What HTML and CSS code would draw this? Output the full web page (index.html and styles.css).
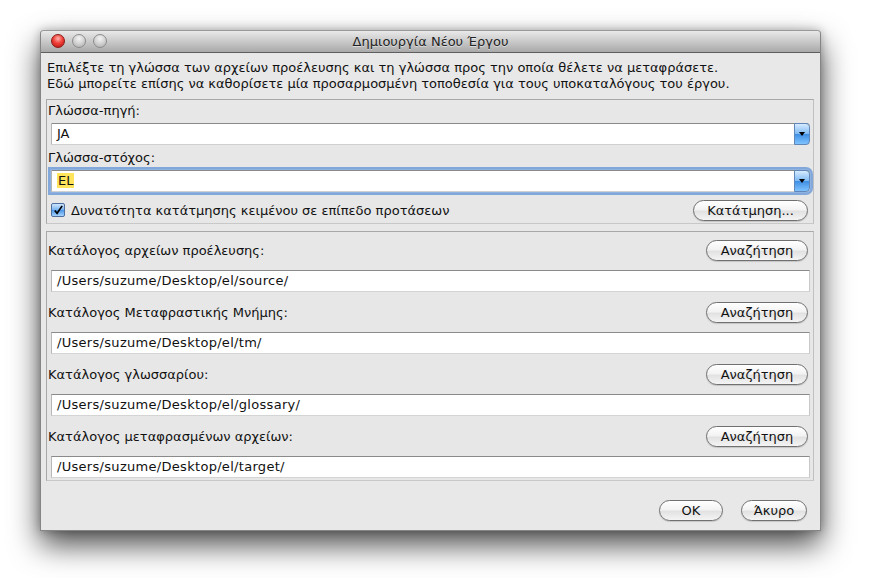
FILE: index.html
```html
<!DOCTYPE html>
<html lang="el">
<head>
<meta charset="utf-8">
<title>Δημιουργία Νέου Έργου</title>
<link rel="stylesheet" href="styles.css">
</head>
<body>
<div class="window">
  <div class="titlebar">
    <div class="lights">
      <span class="light red"></span>
      <span class="light gray"></span>
      <span class="light gray"></span>
    </div>
    <div class="title">Δημιουργία Νέου Έργου</div>
  </div>
  <div class="content">
    <div class="intro">
      <div>Επιλέξτε τη γλώσσα των αρχείων προέλευσης και τη γλώσσα προς την οποία θέλετε να μεταφράσετε.</div>
      <div>Εδώ μπορείτε επίσης να καθορίσετε μία προσαρμοσμένη τοποθεσία για τους υποκαταλόγους του έργου.</div>
    </div>
    <div class="panel lang">
      <div class="label">Γλώσσα-πηγή:</div>
      <div class="combo"><span class="value">JA</span><span class="arrow"><svg width="8" height="6" viewBox="0 0 8 6"><path d="M1 1h6L4 5z" fill="#000"/></svg></span></div>
      <div class="label l2">Γλώσσα-στόχος:</div>
      <div class="combo focus"><span class="value"><span class="sel">EL</span></span><span class="arrow"><svg width="8" height="6" viewBox="0 0 8 6"><path d="M1 1h6L4 5z" fill="#000"/></svg></span></div>
      <div class="checkrow">
        <label class="check"><span class="box"><svg width="13" height="13" viewBox="0 0 13 13"><path d="M3 6.5l2.5 3L11 1.5" fill="none" stroke="#000" stroke-width="1.8"/></svg></span>Δυνατότητα κατάτμησης κειμένου σε επίπεδο προτάσεων</label>
        <button class="btn seg">Κατάτμηση...</button>
      </div>
    </div>
    <div class="panel dirs">
      <div class="row"><span class="rlabel">Κατάλογος αρχείων προέλευσης:</span><button class="btn search">Αναζήτηση</button></div>
      <div class="field">/Users/suzume/Desktop/el/source/</div>
      <div class="row"><span class="rlabel">Κατάλογος Μεταφραστικής Μνήμης:</span><button class="btn search">Αναζήτηση</button></div>
      <div class="field">/Users/suzume/Desktop/el/tm/</div>
      <div class="row"><span class="rlabel">Κατάλογος γλωσσαρίου:</span><button class="btn search">Αναζήτηση</button></div>
      <div class="field">/Users/suzume/Desktop/el/glossary/</div>
      <div class="row"><span class="rlabel">Κατάλογος μεταφρασμένων αρχείων:</span><button class="btn search">Αναζήτηση</button></div>
      <div class="field">/Users/suzume/Desktop/el/target/</div>
    </div>
    <div class="footer">
      <button class="btn ok">OK</button>
      <button class="btn cancel">Άκυρο</button>
    </div>
  </div>
</div>
</body>
</html>
```
FILE: styles.css
```css
* { box-sizing: border-box; }
html, body { margin: 0; padding: 0; background: #fff; }
body {
  font-family: "DejaVu Sans", "Liberation Sans", sans-serif;
  font-size: 13px;
  color: #111;
  padding: 30px 0 0 40px;
  min-height: 578px;
}
.window {
  width: 781px;
  height: 501px;
  background: #e8e8e8;
  border: 1px solid #858585;
  border-top-color: #9a9a9a;
  border-radius: 4px 4px 0 0;
  box-shadow: 0 14px 30px rgba(0,0,0,0.7), 0 0 10px rgba(0,0,0,0.25);
  display: flex;
  flex-direction: column;
}
.titlebar {
  height: 22px;
  flex: none;
  background: linear-gradient(#e9e9e9, #c9c9c9 50%, #a9a9a9);
  border-bottom: 1px solid #5e5e5e;
  border-radius: 4px 4px 0 0;
  position: relative;
  display: flex;
  align-items: center;
  justify-content: center;
}
.lights {
  position: absolute;
  left: 10px;
  top: 3px;
  display: flex;
  gap: 7px;
}
.light {
  width: 14px;
  height: 14px;
  border-radius: 50%;
  display: block;
}
.light.red {
  background: radial-gradient(circle at 50% 30%, #ffb3ad 0, #f0413a 45%, #b5120c 100%);
  border: 1px solid #8a1a14;
}
.light.gray {
  background: radial-gradient(circle at 50% 30%, #f4f4f4 0, #d2d2d2 50%, #a9a9a9 100%);
  border: 1px solid #8d8d8d;
}
.title {
  font-size: 13px;
  color: #222;
  line-height: 16px;
  text-shadow: 0 1px 0 rgba(255,255,255,0.5);
}
.content {
  flex: 1;
  display: flex;
  flex-direction: column;
  padding: 7px 6px 9px 5px;
}
.intro {
  line-height: 16px;
  padding-left: 1px;
}
.panel {
  border: 1px solid #a8a8a8;
  border-right-color: #c0c0c0;
  border-bottom-color: #c8c8c8;
  background: #e7e7e7;
}
.lang {
  margin-top: 7px;
  padding: 3px 3px 1px 0;
}
.label {
  line-height: 16px;
  padding-left: 1px;
}
.l2 { margin-top: 5px; }
.combo {
  margin: 4px 0 0 4px;
  height: 22px;
  display: flex;
  background: #fff;
  border-top: 1px solid #8a8a8a;
  border-left: 1px solid #b4b4b4;
  border-bottom: 1px solid #d0d0d0;
  border-radius: 0 4px 4px 0;
}
.combo .value {
  flex: 1;
  padding-left: 5px;
  line-height: 20px;
}
.combo .sel { background: #ffe45c; padding: 0 1px; }
.combo .arrow {
  width: 16px;
  margin: -1px 0 -1px 0;
  border-radius: 0 4px 4px 0;
  background: linear-gradient(#d6ebff, #7db9f4 50%, #3f8fe4 52%, #7fc3ff);
  border: 1px solid #6187b8;
  display: flex;
  align-items: center;
  justify-content: center;
}
.combo.focus {
  box-shadow: 0 0 0 1px #8fb3e0, 0 0 0 3px rgba(96,146,214,0.75);
}
.checkrow {
  margin-top: 6px;
  height: 24px;
  display: flex;
  align-items: center;
  justify-content: space-between;
  padding-left: 4px;
}
.check {
  display: flex;
  align-items: center;
  gap: 6px;
}
.box {
  width: 14px;
  height: 14px;
  border: 1px solid #4f6f9e;
  border-radius: 2px;
  background: linear-gradient(#cfe6ff, #78b2ee 50%, #4a94e6 52%, #a6d4ff);
  display: flex;
  align-items: center;
  justify-content: center;
}
.btn {
  font-family: inherit;
  font-size: 13px;
  color: #111;
  height: 21px;
  padding: 0;
  border: 1px solid #707070;
  border-radius: 11px;
  background: linear-gradient(#ffffff, #f3f3f3 45%, #e2e2e2 55%, #f4f4f4);
  box-shadow: 0 1px 1px rgba(0,0,0,0.15);
}
.seg { width: 115px; margin-right: 2px; }
.search { width: 102px; }
.dirs {
  margin-top: 7px;
  padding: 6px 3px 2px 1px;
}
.row {
  height: 24px;
  display: flex;
  align-items: center;
  justify-content: space-between;
  padding-right: 2px;
}
.field + .row { margin-top: 8px; }
.field {
  margin: 8px 0 0 3px;
  height: 22px;
  background: #fff;
  border-top: 1px solid #8a8a8a;
  border-left: 1px solid #b8b8b8;
  border-right: 1px solid #c8c8c8;
  border-bottom: 1px solid #d4d4d4;
  line-height: 20px;
  padding-left: 5px;
  letter-spacing: 0.3px;
}
.footer {
  margin-top: auto;
  display: flex;
  justify-content: flex-end;
  gap: 18px;
  padding-right: 7px;
}
.ok { width: 64px; }
.cancel { width: 66px; }
```
